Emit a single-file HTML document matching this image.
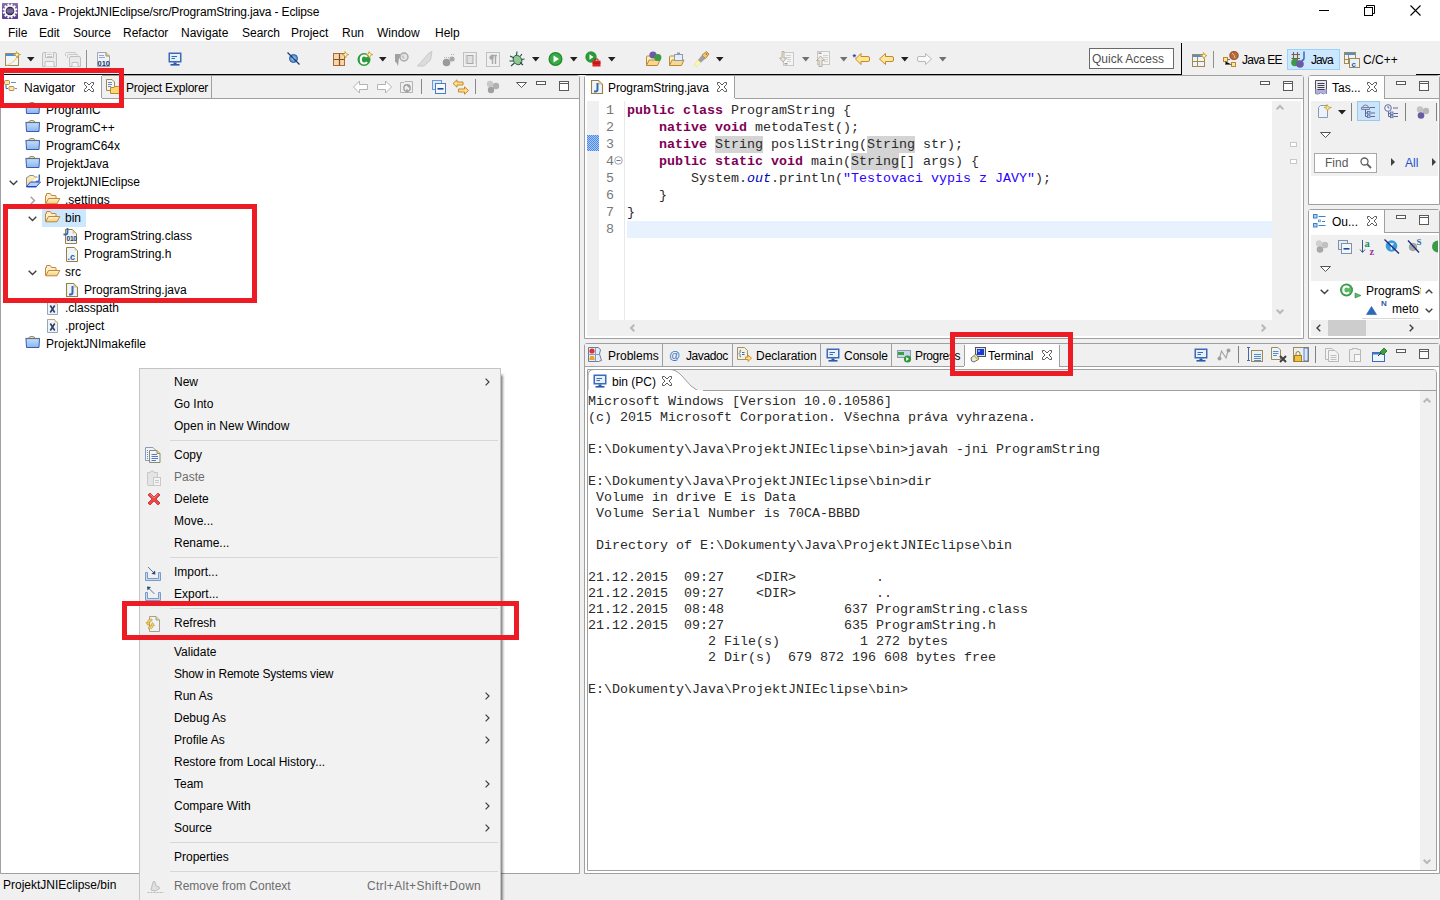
<!DOCTYPE html>
<html><head><meta charset="utf-8">
<style>
*{box-sizing:border-box;margin:0;padding:0}
html,body{width:1440px;height:900px;overflow:hidden;background:#f0f0f0;font-family:"Liberation Sans",sans-serif;font-size:12px;color:#000}
.a{position:absolute}
.t{position:absolute;white-space:nowrap;line-height:14px}
.m{position:absolute;font-family:"Liberation Mono",monospace;font-size:13.33px;white-space:pre;line-height:16px}
svg{position:absolute;overflow:visible}
</style></head><body>
<div class="a" style="left:0px;top:0px;width:1440px;height:41px;background:#fff"></div><svg style="left:2px;top:3px;" width="16" height="16" viewBox="0 0 16 16"><defs><linearGradient id="eg" x1="0" y1="0" x2="0" y2="1"><stop offset="0" stop-color="#8a70a8"/><stop offset="1" stop-color="#5a3898"/></linearGradient></defs>
<rect x="0" y="0" width="16" height="16" rx="0.8" fill="url(#eg)"/>
<g transform="translate(8,8)" fill="#fff"><circle r="5.7"/><rect x="-0.95" y="-7.4" width="1.9" height="2.4" transform="rotate(15)"/><rect x="-0.95" y="-7.4" width="1.9" height="2.4" transform="rotate(45)"/><rect x="-0.95" y="-7.4" width="1.9" height="2.4" transform="rotate(75)"/><rect x="-0.95" y="-7.4" width="1.9" height="2.4" transform="rotate(105)"/><rect x="-0.95" y="-7.4" width="1.9" height="2.4" transform="rotate(135)"/><rect x="-0.95" y="-7.4" width="1.9" height="2.4" transform="rotate(165)"/><rect x="-0.95" y="-7.4" width="1.9" height="2.4" transform="rotate(195)"/><rect x="-0.95" y="-7.4" width="1.9" height="2.4" transform="rotate(225)"/><rect x="-0.95" y="-7.4" width="1.9" height="2.4" transform="rotate(255)"/><rect x="-0.95" y="-7.4" width="1.9" height="2.4" transform="rotate(285)"/><rect x="-0.95" y="-7.4" width="1.9" height="2.4" transform="rotate(315)"/><rect x="-0.95" y="-7.4" width="1.9" height="2.4" transform="rotate(345)"/></g>
<circle cx="8" cy="8" r="4.3" fill="#1e1a2a"/>
<circle cx="8" cy="8" r="3.4" fill="#5a4a80"/>
<rect x="4.4" y="6.6" width="7.2" height="0.9" fill="#9a8ab8"/><rect x="4.4" y="8.4" width="7.2" height="0.9" fill="#9a8ab8"/></svg><div class="t" style="left:23px;top:5px;letter-spacing:-0.15px">Java - ProjektJNIEclipse/src/ProgramString.java - Eclipse</div><div class="a" style="left:1319px;top:10px;width:10px;height:1px;background:#000"></div><svg style="left:1364px;top:5px;" width="11" height="11" viewBox="0 0 11 11"><rect x="0.5" y="2.5" width="8" height="8" fill="none" stroke="#000"/><path d="M2.5 2.5V0.5H10.5V8.5H8.5" fill="none" stroke="#000"/></svg><svg style="left:1410px;top:5px;" width="11" height="11" viewBox="0 0 11 11"><path d="M0.5 0.5L10.5 10.5M10.5 0.5L0.5 10.5" stroke="#000" stroke-width="1.1"/></svg><div class="t" style="left:8px;top:26px">File</div><div class="t" style="left:39px;top:26px">Edit</div><div class="t" style="left:73px;top:26px">Source</div><div class="t" style="left:123px;top:26px">Refactor</div><div class="t" style="left:181px;top:26px">Navigate</div><div class="t" style="left:242px;top:26px">Search</div><div class="t" style="left:291px;top:26px">Project</div><div class="t" style="left:342px;top:26px">Run</div><div class="t" style="left:377px;top:26px">Window</div><div class="t" style="left:435px;top:26px">Help</div><div class="a" style="left:0px;top:74px;width:1182px;height:1px;background:#000"></div><div class="a" style="left:1181px;top:43px;width:1px;height:32px;background:#000"></div><div class="a" style="left:1416px;top:74px;width:24px;height:1px;background:#000"></div><div class="a" style="left:0px;top:75px;width:580px;height:799px;background:#fff;border:1px solid #a0a0a0;border-radius:0 3px 0 0"></div><div class="a" style="left:584px;top:75px;width:720px;height:264px;background:#fff;border:1px solid #a0a0a0;border-radius:3px 3px 0 0"></div><div class="a" style="left:1308px;top:75px;width:132px;height:130px;background:#fff;border:1px solid #a0a0a0;border-radius:3px 3px 0 0"></div><div class="a" style="left:1308px;top:209px;width:132px;height:130px;background:#fff;border:1px solid #a0a0a0;border-radius:3px 3px 0 0"></div><div class="a" style="left:584px;top:343px;width:856px;height:531px;background:#fff;border:1px solid #a0a0a0;border-radius:3px 3px 0 0"></div><div class="t" style="left:3px;top:878px">ProjektJNIEclipse/bin</div><div class="a" style="left:1px;top:76px;width:578px;height:22px;background:#f0f0f0"></div><div class="a" style="left:1px;top:98px;width:578px;height:1px;background:#a0a0a0"></div><div class="a" style="left:1px;top:75px;width:101px;height:24px;background:#fff"></div><div class="a" style="left:101px;top:76px;width:1px;height:22px;background:#a0a0a0"></div><div class="a" style="left:211px;top:76px;width:1px;height:22px;background:#a0a0a0"></div><svg style="left:4px;top:80px;" width="16" height="13" viewBox="0 0 16 13"><rect x="0.5" y="0.5" width="5" height="4" rx="1" fill="#fbeaa6" stroke="#b8894a"/>
<rect x="7" y="2" width="5" height="1" fill="#5a9ad8"/>
<path d="M2 5V8.5H4" fill="none" stroke="#3a6ab8"/>
<rect x="5" y="6.5" width="5" height="4" rx="1" fill="#fbeaa6" stroke="#b8894a"/>
<rect x="11" y="8" width="2" height="1" fill="#5a9ad8"/></svg><div class="t" style="left:24px;top:81px">Navigator</div><svg style="left:84px;top:82px;" width="10" height="10" viewBox="0 0 10 10"><path d="M0.5 0.5H2.5L5 3L7.5 0.5H9.5V2.5L7 5L9.5 7.5V9.5H7.5L5 7L2.5 9.5H0.5V7.5L3 5L0.5 2.5Z" fill="#fff" stroke="#5a5a5a" stroke-linejoin="round"/></svg><svg style="left:106px;top:79px;" width="16" height="16" viewBox="0 0 16 16"><path d="M0.5 0.5H6L8.5 3V11.5H0.5Z" fill="#f4f4f0" stroke="#9a8a5a"/>
<path d="M2 3.5H6M2 5.5H6M2 7.5H5" stroke="#6a8ac8"/>
<path d="M4.5 8.5H8L9 7.5H12.5L13.5 8.5V14.5H4.5Z" fill="#fcd66a" stroke="#b8893a"/></svg><div class="t" style="left:126px;top:81px;letter-spacing:-0.2px">Project Explorer</div><svg style="left:353px;top:80px;" width="16" height="14" viewBox="0 0 16 14"><path d="M0.5 7L6.5 1V4.5H14.5V9.5H6.5V13Z" fill="#fff" stroke="#b4b4b4" stroke-linejoin="round"/></svg><svg style="left:376px;top:80px;" width="16" height="14" viewBox="0 0 16 14"><path d="M15.5 7L9.5 1V4.5H1.5V9.5H9.5V13Z" fill="#fff" stroke="#b4b4b4" stroke-linejoin="round"/></svg><svg style="left:400px;top:80px;" width="13" height="14" viewBox="0 0 13 14"><path d="M0.5 2.5H4L5 1.5H12.5V12.5H0.5Z" fill="#f0f0f0" stroke="#b4b4b4"/><circle cx="7" cy="8" r="3.2" fill="none" stroke="#a0a0a0" stroke-width="1.4"/><path d="M7 5L9.5 7.5M7 13V9" stroke="#a0a0a0" stroke-width="1.2"/></svg><div class="a" style="left:421px;top:79px;width:1px;height:15px;background:#888"></div><svg style="left:432px;top:80px;" width="14" height="14" viewBox="0 0 14 14"><rect x="0.5" y="0.5" width="9" height="9" fill="#dceaf8" stroke="#6a9ad8"/><rect x="3.5" y="3.5" width="10" height="10" fill="#f4f8fc" stroke="#4a7ac8"/><rect x="5.5" y="8" width="6" height="1.6" fill="#1a4a9a"/></svg><svg style="left:452px;top:79px;" width="18" height="16" viewBox="0 0 18 16"><path d="M1 4.5L5 0.8V3H11V6H5V8.2Z" fill="#fde08a" stroke="#c8872a" stroke-linejoin="round"/>
<path d="M16.5 11.5L12.5 7.8V10H6.5V13H12.5V15.2Z" fill="#fde08a" stroke="#c8872a" stroke-linejoin="round"/></svg><div class="a" style="left:475px;top:79px;width:1px;height:15px;background:#888"></div><svg style="left:486px;top:80px;" width="14" height="14" viewBox="0 0 14 14"><circle cx="4" cy="4" r="3.2" fill="#c8c8c8"/><circle cx="10" cy="6" r="3.2" fill="#b0b0b0"/><circle cx="5" cy="10" r="3.2" fill="#a0a0a0"/></svg><svg style="left:516px;top:82px;" width="11" height="6" viewBox="0 0 11 6"><path d="M0.5 0.5H10.5L5.5 5.5Z" fill="#fff" stroke="#5a5a5a"/></svg><svg style="left:536px;top:81px;" width="10" height="4" viewBox="0 0 10 4"><rect x="0.5" y="0.5" width="9" height="3" fill="#fff" stroke="#5a5a5a"/></svg><svg style="left:559px;top:81px;" width="10" height="10" viewBox="0 0 10 10"><rect x="0.5" y="0.5" width="9" height="9" fill="#fff" stroke="#5a5a5a"/><path d="M0.5 2.5H9.5" stroke="#5a5a5a"/></svg><div class="a" style="left:42px;top:209px;width:44px;height:18px;background:#cce8ff"></div><svg style="left:25px;top:102px;" width="16" height="13" viewBox="0 0 16 13"><defs><linearGradient id="pg" x1="0" y1="0" x2="0" y2="1"><stop offset="0" stop-color="#bfe0fb"/><stop offset="1" stop-color="#8eb6ec"/></linearGradient></defs>
<path d="M3.5 2.5Q4 0.5 6 0.5H8Q9.5 0.5 10 2.5" fill="#fce6a0" stroke="#8a8e96"/>
<path d="M1 2.5H14.5L14 11.5H1.5Z" fill="url(#pg)" stroke="#3a5ab8"/>
<path d="M0.5 2.5H14.5" stroke="#6a7080" stroke-width="1.2"/></svg><div class="t" style="left:46px;top:103px">ProgramC</div><svg style="left:25px;top:120px;" width="16" height="13" viewBox="0 0 16 13"><defs><linearGradient id="pg" x1="0" y1="0" x2="0" y2="1"><stop offset="0" stop-color="#bfe0fb"/><stop offset="1" stop-color="#8eb6ec"/></linearGradient></defs>
<path d="M3.5 2.5Q4 0.5 6 0.5H8Q9.5 0.5 10 2.5" fill="#fce6a0" stroke="#8a8e96"/>
<path d="M1 2.5H14.5L14 11.5H1.5Z" fill="url(#pg)" stroke="#3a5ab8"/>
<path d="M0.5 2.5H14.5" stroke="#6a7080" stroke-width="1.2"/></svg><div class="t" style="left:46px;top:121px">ProgramC++</div><svg style="left:25px;top:138px;" width="16" height="13" viewBox="0 0 16 13"><defs><linearGradient id="pg" x1="0" y1="0" x2="0" y2="1"><stop offset="0" stop-color="#bfe0fb"/><stop offset="1" stop-color="#8eb6ec"/></linearGradient></defs>
<path d="M3.5 2.5Q4 0.5 6 0.5H8Q9.5 0.5 10 2.5" fill="#fce6a0" stroke="#8a8e96"/>
<path d="M1 2.5H14.5L14 11.5H1.5Z" fill="url(#pg)" stroke="#3a5ab8"/>
<path d="M0.5 2.5H14.5" stroke="#6a7080" stroke-width="1.2"/></svg><div class="t" style="left:46px;top:139px">ProgramC64x</div><svg style="left:25px;top:156px;" width="16" height="13" viewBox="0 0 16 13"><defs><linearGradient id="pg" x1="0" y1="0" x2="0" y2="1"><stop offset="0" stop-color="#bfe0fb"/><stop offset="1" stop-color="#8eb6ec"/></linearGradient></defs>
<path d="M3.5 2.5Q4 0.5 6 0.5H8Q9.5 0.5 10 2.5" fill="#fce6a0" stroke="#8a8e96"/>
<path d="M1 2.5H14.5L14 11.5H1.5Z" fill="url(#pg)" stroke="#3a5ab8"/>
<path d="M0.5 2.5H14.5" stroke="#6a7080" stroke-width="1.2"/></svg><div class="t" style="left:46px;top:157px">ProjektJava</div><svg style="left:25px;top:174px;" width="17" height="14" viewBox="0 0 17 14"><defs><linearGradient id="pj" x1="0" y1="0" x2="0" y2="1"><stop offset="0" stop-color="#fff2c8"/><stop offset="1" stop-color="#f8d488"/></linearGradient></defs>
<path d="M1.5 12.5V4Q1.5 3 2.5 3H3.5L4.5 1.5H8.5L9.5 3H12.5" fill="url(#pj)" stroke="#8a8e98"/>
<path d="M1.5 12.5L5.5 8H15.5L11.5 12.5Z" fill="#aad2fa" stroke="#3048c0" stroke-linejoin="round"/>
<path d="M1.5 12.8H11.5" stroke="#2840c0" stroke-width="1.3"/>
<path d="M14.3 0.5V5.5Q14.3 7.5 12.3 7.5Q11.5 7.5 11 7" fill="none" stroke="#3a6aa8" stroke-width="1.5"/></svg><svg style="left:9px;top:180px;" width="9" height="6" viewBox="0 0 9 6"><path d="M0.7 0.7L4.5 4.5L8.3 0.7" fill="none" stroke="#404040" stroke-width="1.4"/></svg><div class="t" style="left:46px;top:175px">ProjektJNIEclipse</div><svg style="left:45px;top:193px;" width="16" height="12" viewBox="0 0 16 12"><defs><linearGradient id="fg" x1="0" y1="0" x2="0" y2="1"><stop offset="0" stop-color="#fff4cc"/><stop offset="1" stop-color="#f4cf78"/></linearGradient></defs>
<path d="M0.5 10.5V3Q0.5 2.5 1 2.5H1.5V1Q1.5 0.5 2 0.5H5Q5.5 0.5 6 1.5L6.5 2.5H10.5Q11 2.5 11 3V5" fill="#fcefc8" stroke="#c4843a"/>
<path d="M0.8 10.8L3.5 5.5H14.8L12 10.8Z" fill="url(#fg)" stroke="#c4843a" stroke-linejoin="round"/></svg><svg style="left:30px;top:196px;" width="6" height="9" viewBox="0 0 6 9"><path d="M0.7 0.7L4.5 4.5L0.7 8.3" fill="none" stroke="#a0a0a0" stroke-width="1.4"/></svg><div class="t" style="left:65px;top:193px">.settings</div><svg style="left:45px;top:211px;" width="16" height="12" viewBox="0 0 16 12"><defs><linearGradient id="fg" x1="0" y1="0" x2="0" y2="1"><stop offset="0" stop-color="#fff4cc"/><stop offset="1" stop-color="#f4cf78"/></linearGradient></defs>
<path d="M0.5 10.5V3Q0.5 2.5 1 2.5H1.5V1Q1.5 0.5 2 0.5H5Q5.5 0.5 6 1.5L6.5 2.5H10.5Q11 2.5 11 3V5" fill="#fcefc8" stroke="#c4843a"/>
<path d="M0.8 10.8L3.5 5.5H14.8L12 10.8Z" fill="url(#fg)" stroke="#c4843a" stroke-linejoin="round"/></svg><svg style="left:28px;top:216px;" width="9" height="6" viewBox="0 0 9 6"><path d="M0.7 0.7L4.5 4.5L8.3 0.7" fill="none" stroke="#404040" stroke-width="1.4"/></svg><div class="t" style="left:65px;top:211px">bin</div><svg style="left:63px;top:228px;" width="16" height="16" viewBox="0 0 16 16"><path d="M2.5 1.5H9.5L13.5 5.5V15.5H2.5Z" fill="#eef4fb" stroke="#9a8040"/>
<path d="M9.5 1.5V5.5H13.5Z" fill="#dcc890"/>
<path d="M4.5 0V4.5Q4.5 6.5 2.5 6.5H0.5" fill="none" stroke="#3a6aa8" stroke-width="1.8"/>
<text x="3.6" y="13.3" font-family="Liberation Sans" font-size="6.6" font-weight="bold" fill="#1a3a6a" letter-spacing="-0.3">010</text></svg><div class="t" style="left:84px;top:229px">ProgramString.class</div><svg style="left:66px;top:247px;" width="13" height="15" viewBox="0 0 13 15"><path d="M0.5 0.5H8.5L11.5 3.5V14.5H0.5Z" fill="#eef4fb" stroke="#9a8040"/>
<path d="M8.5 0.5V3.5H11.5Z" fill="#dcc890"/>
<text x="1.5" y="12.5" font-family="Liberation Sans" font-size="9" font-weight="bold" fill="#2a5aa8">.c</text></svg><div class="t" style="left:84px;top:247px">ProgramString.h</div><svg style="left:45px;top:265px;" width="16" height="12" viewBox="0 0 16 12"><defs><linearGradient id="fg" x1="0" y1="0" x2="0" y2="1"><stop offset="0" stop-color="#fff4cc"/><stop offset="1" stop-color="#f4cf78"/></linearGradient></defs>
<path d="M0.5 10.5V3Q0.5 2.5 1 2.5H1.5V1Q1.5 0.5 2 0.5H5Q5.5 0.5 6 1.5L6.5 2.5H10.5Q11 2.5 11 3V5" fill="#fcefc8" stroke="#c4843a"/>
<path d="M0.8 10.8L3.5 5.5H14.8L12 10.8Z" fill="url(#fg)" stroke="#c4843a" stroke-linejoin="round"/></svg><svg style="left:28px;top:270px;" width="9" height="6" viewBox="0 0 9 6"><path d="M0.7 0.7L4.5 4.5L8.3 0.7" fill="none" stroke="#404040" stroke-width="1.4"/></svg><div class="t" style="left:65px;top:265px">src</div><svg style="left:66px;top:283px;" width="12" height="14" viewBox="0 0 12 14"><path d="M0.5 0.5H7.5L11.5 4.5V13.5H0.5Z" fill="#eef4fb" stroke="#9a8040" stroke-width="1.1"/>
<path d="M7.5 0.5V4.5H11.5Z" fill="#dcc890"/>
<path d="M6.5 3V9.5Q6.5 11.5 4.5 11.5H3" fill="none" stroke="#3a6aa8" stroke-width="2"/></svg><div class="t" style="left:84px;top:283px">ProgramString.java</div><svg style="left:47px;top:301px;" width="12" height="15" viewBox="0 0 12 15"><path d="M0.5 0.5H7.5L10.5 3.5V13.5H0.5Z" fill="#f0f4fa" stroke="#98a4b8"/>
<path d="M0.5 0.5H7.5L10.5 3.5V6" fill="none" stroke="#b8a880"/>
<path d="M7.5 0.5V3.5H10.5Z" fill="#e0cc90"/>
<path d="M3.3 4.5L7.7 11.5M7.7 4.5L3.3 11.5" stroke="#2a4068" stroke-width="1.6"/></svg><div class="t" style="left:65px;top:301px">.classpath</div><svg style="left:47px;top:319px;" width="12" height="15" viewBox="0 0 12 15"><path d="M0.5 0.5H7.5L10.5 3.5V13.5H0.5Z" fill="#f0f4fa" stroke="#98a4b8"/>
<path d="M0.5 0.5H7.5L10.5 3.5V6" fill="none" stroke="#b8a880"/>
<path d="M7.5 0.5V3.5H10.5Z" fill="#e0cc90"/>
<path d="M3.3 4.5L7.7 11.5M7.7 4.5L3.3 11.5" stroke="#2a4068" stroke-width="1.6"/></svg><div class="t" style="left:65px;top:319px">.project</div><svg style="left:25px;top:336px;" width="16" height="13" viewBox="0 0 16 13"><defs><linearGradient id="pg" x1="0" y1="0" x2="0" y2="1"><stop offset="0" stop-color="#bfe0fb"/><stop offset="1" stop-color="#8eb6ec"/></linearGradient></defs>
<path d="M3.5 2.5Q4 0.5 6 0.5H8Q9.5 0.5 10 2.5" fill="#fce6a0" stroke="#8a8e96"/>
<path d="M1 2.5H14.5L14 11.5H1.5Z" fill="url(#pg)" stroke="#3a5ab8"/>
<path d="M0.5 2.5H14.5" stroke="#6a7080" stroke-width="1.2"/></svg><div class="t" style="left:46px;top:337px">ProjektJNImakefile</div><div class="a" style="left:585px;top:76px;width:718px;height:22px;background:#f0f0f0"></div><div class="a" style="left:585px;top:98px;width:718px;height:1px;background:#a0a0a0"></div><div class="a" style="left:585px;top:76px;width:150px;height:23px;background:#fff;border-top-right-radius:3px"></div><div class="a" style="left:734px;top:76px;width:1px;height:22px;background:#a0a0a0"></div><svg style="left:591px;top:80px;" width="12" height="14" viewBox="0 0 12 14"><path d="M0.5 0.5H7.5L11.5 4.5V13.5H0.5Z" fill="#eef4fb" stroke="#9a8040" stroke-width="1.1"/>
<path d="M7.5 0.5V4.5H11.5Z" fill="#dcc890"/>
<path d="M6.5 3V9.5Q6.5 11.5 4.5 11.5H3" fill="none" stroke="#3a6aa8" stroke-width="2"/></svg><div class="t" style="left:608px;top:81px;letter-spacing:-0.1px">ProgramString.java</div><svg style="left:717px;top:82px;" width="10" height="10" viewBox="0 0 10 10"><path d="M0.5 0.5H2.5L5 3L7.5 0.5H9.5V2.5L7 5L9.5 7.5V9.5H7.5L5 7L2.5 9.5H0.5V7.5L3 5L0.5 2.5Z" fill="#fff" stroke="#5a5a5a" stroke-linejoin="round"/></svg><svg style="left:1260px;top:81px;" width="10" height="4" viewBox="0 0 10 4"><rect x="0.5" y="0.5" width="9" height="3" fill="#fff" stroke="#5a5a5a"/></svg><svg style="left:1283px;top:81px;" width="10" height="10" viewBox="0 0 10 10"><rect x="0.5" y="0.5" width="9" height="9" fill="#fff" stroke="#5a5a5a"/><path d="M0.5 2.5H9.5" stroke="#5a5a5a"/></svg><div class="a" style="left:587px;top:101px;width:12px;height:219px;background:#f0f0f0"></div><svg style="left:587px;top:135px;" width="12" height="16" viewBox="0 0 12 16"><defs><pattern id="chk" width="2" height="2" patternUnits="userSpaceOnUse"><rect width="2" height="2" fill="#a8c8f0"/><rect width="1" height="1" fill="#4a8ae8"/><rect x="1" y="1" width="1" height="1" fill="#4a8ae8"/></pattern></defs><rect width="12" height="16" fill="url(#chk)"/></svg><div class="a" style="left:624px;top:101px;width:1px;height:219px;background:#e8e8e8"></div><div class="a" style="left:627px;top:221px;width:645px;height:17px;background:#e8f2fe"></div><div class="a" style="left:715px;top:136px;width:48px;height:17px;background:#d4d4d4"></div><div class="a" style="left:867px;top:136px;width:48px;height:17px;background:#d4d4d4"></div><div class="a" style="left:851px;top:153px;width:48px;height:17px;background:#d4d4d4"></div><div class="m" style="left:606px;top:102px;line-height:17px;color:#787878">1</div><div class="m" style="left:606px;top:119px;line-height:17px;color:#787878">2</div><div class="m" style="left:606px;top:136px;line-height:17px;color:#787878">3</div><div class="m" style="left:606px;top:153px;line-height:17px;color:#787878">4</div><div class="m" style="left:606px;top:170px;line-height:17px;color:#787878">5</div><div class="m" style="left:606px;top:187px;line-height:17px;color:#787878">6</div><div class="m" style="left:606px;top:204px;line-height:17px;color:#787878">7</div><div class="m" style="left:606px;top:221px;line-height:17px;color:#787878">8</div><svg style="left:614px;top:156px;" width="9" height="9" viewBox="0 0 9 9"><circle cx="4.5" cy="4.5" r="3.8" fill="#fff" stroke="#a0a0b0"/><path d="M2.5 4.5H6.5" stroke="#707080"/></svg><div class="m" style="left:627px;top:102px;line-height:17px;color:#2a2a2a"><span style="color:#7f0055;font-weight:bold">public</span> <span style="color:#7f0055;font-weight:bold">class</span> ProgramString {</div><div class="m" style="left:627px;top:119px;line-height:17px;color:#2a2a2a">    <span style="color:#7f0055;font-weight:bold">native</span> <span style="color:#7f0055;font-weight:bold">void</span> metodaTest();</div><div class="m" style="left:627px;top:136px;line-height:17px;color:#2a2a2a">    <span style="color:#7f0055;font-weight:bold">native</span> String posliString(String str);</div><div class="m" style="left:627px;top:153px;line-height:17px;color:#2a2a2a">    <span style="color:#7f0055;font-weight:bold">public</span> <span style="color:#7f0055;font-weight:bold">static</span> <span style="color:#7f0055;font-weight:bold">void</span> main(String[] args) {</div><div class="m" style="left:627px;top:170px;line-height:17px;color:#2a2a2a">        System.<span style="color:#0000c0;font-style:italic">out</span>.println(<span style="color:#2a00ff">"Testovaci vypis z JAVY"</span>);</div><div class="m" style="left:627px;top:187px;line-height:17px;color:#2a2a2a">    }</div><div class="m" style="left:627px;top:204px;line-height:17px;color:#2a2a2a">}</div><div class="a" style="left:1272px;top:101px;width:29px;height:219px;background:#f0f0f0"></div><svg style="left:1276px;top:105px;" width="8" height="5" viewBox="0 0 8 5"><path d="M0.7 4.3L4 1L7.3 4.3" fill="none" stroke="#b8b8b8" stroke-width="2"/></svg><svg style="left:1276px;top:309px;" width="8" height="5" viewBox="0 0 8 5"><path d="M0.7 0.7L4 4L7.3 0.7" fill="none" stroke="#b8b8b8" stroke-width="2"/></svg><div class="a" style="left:1290px;top:142px;width:7px;height:5px;background:#fff;border:1px solid #c8c8c8"></div><div class="a" style="left:1290px;top:159px;width:7px;height:5px;background:#fff;border:1px solid #c8c8c8"></div><div class="a" style="left:587px;top:320px;width:685px;height:16px;background:#f0f0f0"></div><div class="a" style="left:1272px;top:320px;width:29px;height:16px;background:#f0f0f0"></div><svg style="left:630px;top:324px;" width="5" height="8" viewBox="0 0 5 8"><path d="M4.3 0.7L1 4L4.3 7.3" fill="none" stroke="#b8b8b8" stroke-width="2"/></svg><svg style="left:1261px;top:324px;" width="5" height="8" viewBox="0 0 5 8"><path d="M0.7 0.7L4 4L0.7 7.3" fill="none" stroke="#b8b8b8" stroke-width="2"/></svg><div class="a" style="left:1309px;top:76px;width:130px;height:22px;background:#f0f0f0"></div><div class="a" style="left:1309px;top:98px;width:130px;height:1px;background:#a0a0a0"></div><div class="a" style="left:1309px;top:76px;width:75px;height:23px;background:#fff;border-top-left-radius:3px"></div><div class="a" style="left:1384px;top:76px;width:1px;height:22px;background:#a0a0a0"></div><svg style="left:1315px;top:80px;" width="12" height="15" viewBox="0 0 12 15"><path d="M0.5 0.5H11.5V13.5L10 12.5L8.5 14L6 12.5L3 14L0.5 13.5Z" fill="#e8e8f4" stroke="#505060"/><path d="M0.5 9H11.5V13.5L8.5 14L6 12.5L3 14L0.5 13.5Z" fill="#b0b0e0"/><path d="M2.5 3.5H9.5M2.5 5.5H9.5M2.5 7.5H9.5M2.5 9.5H9.5" stroke="#404040"/></svg><div class="t" style="left:1332px;top:81px">Tas...</div><svg style="left:1367px;top:82px;" width="10" height="10" viewBox="0 0 10 10"><path d="M0.5 0.5H2.5L5 3L7.5 0.5H9.5V2.5L7 5L9.5 7.5V9.5H7.5L5 7L2.5 9.5H0.5V7.5L3 5L0.5 2.5Z" fill="#fff" stroke="#5a5a5a" stroke-linejoin="round"/></svg><svg style="left:1396px;top:81px;" width="10" height="4" viewBox="0 0 10 4"><rect x="0.5" y="0.5" width="9" height="3" fill="#fff" stroke="#5a5a5a"/></svg><svg style="left:1419px;top:81px;" width="10" height="10" viewBox="0 0 10 10"><rect x="0.5" y="0.5" width="9" height="9" fill="#fff" stroke="#5a5a5a"/><path d="M0.5 2.5H9.5" stroke="#5a5a5a"/></svg><div class="a" style="left:1311px;top:101px;width:127px;height:75px;background:#f0f0f0"></div><svg style="left:1318px;top:104px;" width="14" height="15" viewBox="0 0 14 15"><path d="M0.5 3.5L2.5 1.5H9.5V13.5H0.5Z" fill="#eef2fa" stroke="#8a9ab8"/><path d="M9 0.5L10.5 3L13.5 3.5L10.5 4.5L9.5 7L8.5 4.5L6 3.5L8.5 3Z" fill="#fde88a" stroke="#c8a030" stroke-width="0.8"/></svg><svg style="left:1338px;top:110px;" width="8" height="5" viewBox="0 0 8 5"><path d="M0 0H8L4 4.5Z" fill="#202020"/></svg><div class="a" style="left:1351px;top:103px;width:1px;height:18px;background:#808080"></div><div class="a" style="left:1357px;top:101px;width:23px;height:20px;background:#cce4f7;border:1px solid #99c9ef"></div><svg style="left:1361px;top:104px;" width="15" height="14" viewBox="0 0 15 14"><path d="M1.5 3.5Q2 1 4.5 1Q7 1 7.5 3.5Z" fill="#f4d8c8" stroke="#7080b0"/><path d="M0.5 3.5H8.5V5.5H0.5Z" fill="#c8d0e8" stroke="#7080b0"/><path d="M4.5 5.5V12.5H7M4.5 9H7M9 3.5H14M9.5 9H14M9.5 12.5H14" fill="none" stroke="#5a6aa0"/><rect x="6.5" y="7.5" width="2.5" height="2.5" fill="#c8d0e8" stroke="#5a6aa0" stroke-width="0.8"/><rect x="6.5" y="11" width="2.5" height="2.5" fill="#c8d0e8" stroke="#5a6aa0" stroke-width="0.8"/></svg><svg style="left:1384px;top:104px;" width="15" height="14" viewBox="0 0 15 14"><circle cx="4" cy="4" r="3.3" fill="#f4f8fc" stroke="#5a6aa0"/><path d="M4 2V4H5.5" stroke="#5a6aa0" fill="none"/><path d="M4.5 7.5V12.5H7M4.5 9.5H7M9 4H14M9.5 9.5H14M9.5 12.5H14" fill="none" stroke="#5a6aa0"/><rect x="6.5" y="8" width="2.5" height="2.5" fill="#c8d0e8" stroke="#5a6aa0" stroke-width="0.8"/><rect x="6.5" y="11.2" width="2.5" height="2.5" fill="#c8d0e8" stroke="#5a6aa0" stroke-width="0.8"/></svg><div class="a" style="left:1405px;top:103px;width:1px;height:18px;background:#808080"></div><svg style="left:1416px;top:106px;" width="14" height="13" viewBox="0 0 14 13"><circle cx="4" cy="3.5" r="3.2" fill="#c4c4c4"/><circle cx="10" cy="5" r="3.2" fill="#b8b8b8"/><circle cx="5" cy="9.5" r="3.3" fill="#6a5aa0"/></svg><div class="a" style="left:1436px;top:103px;width:1px;height:18px;background:#808080"></div><svg style="left:1320px;top:132px;" width="11" height="6" viewBox="0 0 11 6"><path d="M0.5 0.5H10.5L5.5 5.5Z" fill="#fff" stroke="#555"/></svg><div class="a" style="left:1314px;top:153px;width:63px;height:20px;background:#fff;border:1px solid #a8a8a8"></div><div class="t" style="left:1325px;top:156px;color:#5a5a5a">Find</div><svg style="left:1360px;top:157px;" width="12" height="12" viewBox="0 0 12 12"><circle cx="4.5" cy="4.5" r="3.5" fill="#fff" stroke="#606060" stroke-width="1.3"/><path d="M7 7L11 11" stroke="#606060" stroke-width="1.8"/></svg><svg style="left:1391px;top:158px;" width="4" height="8" viewBox="0 0 4 8"><path d="M0 0L4 4L0 8Z" fill="#404040"/></svg><div class="t" style="left:1405px;top:156px;color:#2050d0">All</div><svg style="left:1432px;top:158px;" width="4" height="8" viewBox="0 0 4 8"><path d="M0 0L4 4L0 8Z" fill="#404040"/></svg><div class="a" style="left:1309px;top:210px;width:130px;height:22px;background:#f0f0f0"></div><div class="a" style="left:1309px;top:232px;width:130px;height:1px;background:#a0a0a0"></div><div class="a" style="left:1309px;top:210px;width:75px;height:23px;background:#fff;border-top-left-radius:3px"></div><div class="a" style="left:1384px;top:210px;width:1px;height:22px;background:#a0a0a0"></div><svg style="left:1313px;top:214px;" width="13" height="14" viewBox="0 0 13 14"><rect x="0.5" y="0.5" width="3.5" height="3.5" fill="#a8d0f8" stroke="#3a80c8"/><rect x="0.5" y="9.5" width="3.5" height="3.5" fill="#a8d0f8" stroke="#3a80c8"/><rect x="5.5" y="6" width="1.8" height="1.8" fill="#fff" stroke="#3a80c8" stroke-width="0.7"/><path d="M5.5 2.5H12.5M9 7.5H12M5.5 11.5H12.5" stroke="#3a80c8"/></svg><div class="t" style="left:1332px;top:215px">Ou...</div><svg style="left:1367px;top:216px;" width="10" height="10" viewBox="0 0 10 10"><path d="M0.5 0.5H2.5L5 3L7.5 0.5H9.5V2.5L7 5L9.5 7.5V9.5H7.5L5 7L2.5 9.5H0.5V7.5L3 5L0.5 2.5Z" fill="#fff" stroke="#5a5a5a" stroke-linejoin="round"/></svg><svg style="left:1396px;top:215px;" width="10" height="4" viewBox="0 0 10 4"><rect x="0.5" y="0.5" width="9" height="3" fill="#fff" stroke="#5a5a5a"/></svg><svg style="left:1419px;top:215px;" width="10" height="10" viewBox="0 0 10 10"><rect x="0.5" y="0.5" width="9" height="9" fill="#fff" stroke="#5a5a5a"/><path d="M0.5 2.5H9.5" stroke="#5a5a5a"/></svg><div class="a" style="left:1311px;top:235px;width:127px;height:46px;background:#f0f0f0"></div><svg style="left:1315px;top:240px;" width="14" height="13" viewBox="0 0 14 13"><circle cx="4" cy="3.5" r="3.2" fill="#d0d0d0"/><circle cx="10" cy="5" r="3.2" fill="#c0c0c0"/><circle cx="5" cy="9.5" r="3.3" fill="#a8a8a8"/></svg><svg style="left:1338px;top:240px;" width="14" height="14" viewBox="0 0 14 14"><rect x="0.5" y="0.5" width="9" height="9" fill="#e4ecf4" stroke="#8090a8"/><rect x="3.5" y="3.5" width="10" height="10" fill="#f0f6fa" stroke="#8090a8"/><rect x="5.5" y="8" width="6" height="1.6" fill="#1a4a9a"/></svg><svg style="left:1359px;top:238px;" width="19" height="17" viewBox="0 0 19 17"><path d="M3.5 2V14M1 11.5L3.5 14.5L6 11.5" fill="none" stroke="#3a5a8a" stroke-width="1"/><text x="5.5" y="8.5" font-family="Liberation Serif" font-size="10.5" font-weight="bold" fill="#1a8a6a">a</text><text x="10.5" y="16.5" font-family="Liberation Serif" font-size="10.5" font-weight="bold" fill="#9a3a9a">z</text></svg><svg style="left:1384px;top:239px;" width="16" height="16" viewBox="0 0 16 16"><circle cx="7.5" cy="7" r="5.8" fill="#3a9ae0"/><path d="M5.5 5H9.5M7.5 5V10.5" stroke="#fff" stroke-width="1.6"/><path d="M0.5 0.5L15 14.5" stroke="#1a2a7a" stroke-width="1.3"/></svg><svg style="left:1407px;top:237px;" width="15" height="17" viewBox="0 0 15 17"><circle cx="6" cy="10" r="3.8" fill="#a8a8a8" stroke="#909090" stroke-width="0.6"/><path d="M1 3.5L12 15.5" stroke="#1a2a7a" stroke-width="1.3"/><text x="9.5" y="8" font-family="Liberation Serif" font-size="9" font-weight="bold" fill="#2a6aa8">S</text></svg><svg style="left:1433px;top:240px;" width="5" height="13" viewBox="0 0 5 13"><path d="M5 0.5A6 6 0 0 0 5 12.5Z" fill="#3a9a4a"/></svg><svg style="left:1320px;top:266px;" width="11" height="6" viewBox="0 0 11 6"><path d="M0.5 0.5H10.5L5.5 5.5Z" fill="#fff" stroke="#555"/></svg><svg style="left:1320px;top:289px;" width="9" height="6" viewBox="0 0 9 6"><path d="M0.7 0.7L4.5 4.5L8.3 0.7" fill="none" stroke="#404040" stroke-width="1.4"/></svg><svg style="left:1339px;top:283px;" width="23" height="15" viewBox="0 0 23 15"><circle cx="7.5" cy="7" r="6.5" fill="#3a9a48"/><circle cx="7.5" cy="7" r="5" fill="#5ab868"/><path d="M10 4.8Q9 3.6 7.6 3.6Q4.3 3.6 4.3 7Q4.3 10.4 7.6 10.4Q9 10.4 10 9.2" fill="none" stroke="#fff" stroke-width="2"/><path d="M16 10L22 12.5L16 15Z" fill="#5aba68" stroke="#2a8a38" stroke-width="0.6"/></svg><div class="t" style="left:1366px;top:284px">ProgramSt</div><svg style="left:1366px;top:306px;" width="11" height="9" viewBox="0 0 11 9"><path d="M0.5 8.5L5.5 0.5L10.5 8.5Z" fill="#2a6ab8" stroke="#2a5aa8" stroke-width="0.6"/></svg><div class="t" style="left:1381px;top:299px;font-size:8px;line-height:9px;color:#2a5aa8;font-weight:bold">N</div><div class="t" style="left:1392px;top:302px">meto</div><div class="a" style="left:1421px;top:281px;width:17px;height:38px;background:#fff"></div><svg style="left:1425px;top:289px;" width="8" height="5" viewBox="0 0 8 5"><path d="M0.7 4.3L4 1L7.3 4.3" fill="none" stroke="#404040" stroke-width="1.4"/></svg><svg style="left:1425px;top:308px;" width="8" height="5" viewBox="0 0 8 5"><path d="M0.7 0.7L4 4L7.3 0.7" fill="none" stroke="#404040" stroke-width="1.4"/></svg><div class="a" style="left:1362px;top:318px;width:58px;height:1px;background:#d8d8d8"></div><div class="a" style="left:1311px;top:320px;width:127px;height:16px;background:#f0f0f0"></div><div class="a" style="left:1328px;top:320px;width:38px;height:16px;background:#cdcdcd"></div><svg style="left:1316px;top:324px;" width="5" height="8" viewBox="0 0 5 8"><path d="M4.3 0.7L1 4L4.3 7.3" fill="none" stroke="#404040" stroke-width="1.4"/></svg><svg style="left:1409px;top:324px;" width="5" height="8" viewBox="0 0 5 8"><path d="M0.7 0.7L4 4L0.7 7.3" fill="none" stroke="#404040" stroke-width="1.4"/></svg><div class="a" style="left:585px;top:344px;width:854px;height:22px;background:#f0f0f0"></div><div class="a" style="left:585px;top:366px;width:854px;height:1px;background:#a0a0a0"></div><div class="a" style="left:662px;top:344px;width:1px;height:22px;background:#a0a0a0"></div><div class="a" style="left:732px;top:344px;width:1px;height:22px;background:#a0a0a0"></div><div class="a" style="left:820px;top:344px;width:1px;height:22px;background:#a0a0a0"></div><div class="a" style="left:891px;top:344px;width:1px;height:22px;background:#a0a0a0"></div><div class="a" style="left:964px;top:344px;width:95px;height:23px;background:#fff;border-top-left-radius:3px;border-top-right-radius:3px"></div><div class="a" style="left:964px;top:345px;width:1px;height:21px;background:#a0a0a0"></div><div class="a" style="left:1059px;top:345px;width:1px;height:21px;background:#a0a0a0"></div><svg style="left:588px;top:347px;" width="15" height="15" viewBox="0 0 15 15"><path d="M0.5 0.5H10L12.5 2.5L11.5 7L13.5 13.5L10.5 14.5H0.5Z" fill="#e4eefa" stroke="#6a7a9a"/><path d="M0.5 7.5H11.5M7.5 0.5V14.5" stroke="#8a9aba"/><circle cx="4" cy="4" r="2.6" fill="#e03030"/><path d="M1.5 13V11Q1.5 8.8 4 8.8Q6.5 8.8 6.5 11V13Z" fill="#f8a020"/></svg><div class="t" style="left:608px;top:349px">Problems</div><svg style="left:669px;top:349px;" width="11" height="11" viewBox="0 0 11 11"><text x="0" y="9.5" font-family="Liberation Sans" font-size="11" font-style="italic" font-weight="bold" fill="#3a7ac8">@</text></svg><div class="t" style="left:686px;top:349px;letter-spacing:-0.4px">Javadoc</div><svg style="left:737px;top:347px;" width="15" height="15" viewBox="0 0 15 15"><path d="M0.5 0.5H7.5L10.5 3.5V12.5H0.5Z" fill="#f4f0e0" stroke="#a89060"/><path d="M4 3Q3 3 3 4.5V5.5L2 6.5L3 7.5V8.5Q3 10 4 10" fill="none" stroke="#3a6ab8"/><path d="M5 5.5H7.5M5 7.5H7.5" stroke="#3a6ab8"/><path d="M8.5 10H11V8L14.5 11.2L11 14.5V12.5H8.5Z" fill="#fde08a" stroke="#c8872a" stroke-width="0.9"/></svg><div class="t" style="left:756px;top:349px">Declaration</div><svg style="left:826px;top:348px;" width="14" height="14" viewBox="0 0 14 14"><rect x="0.5" y="0.5" width="13" height="10" fill="#3a6ab8"/><rect x="2" y="2" width="10" height="7" fill="#e8f0fa"/><path d="M3.5 4.5H9M3.5 6.5H7" stroke="#3a6ab8"/><rect x="5.5" y="10.5" width="3" height="1.5" fill="#2a5aa8"/><rect x="2.5" y="12" width="9" height="1.6" fill="#2a5aa8"/></svg><div class="t" style="left:844px;top:349px">Console</div><svg style="left:897px;top:349px;" width="15" height="14" viewBox="0 0 15 14"><rect x="0.5" y="1.5" width="13" height="7" fill="#c8d8ea" stroke="#8a9aaa"/><rect x="1" y="3" width="6" height="3" fill="#3aa040"/><circle cx="10.5" cy="10" r="3.6" fill="#2a9a3a"/><path d="M9.2 8L12 10L9.2 12Z" fill="#fff"/></svg><div class="t" style="left:915px;top:349px;letter-spacing:-0.35px">Progress</div><svg style="left:969px;top:347px;" width="17" height="17" viewBox="0 0 17 17"><rect x="6.5" y="0.5" width="10" height="9" fill="#e0e0e0" stroke="#505050"/><rect x="8" y="2" width="7" height="6" fill="#1a3ad8"/><rect x="9" y="3" width="2" height="2" fill="#80a0ff"/><path d="M2 11L7 7L10 12L5 15Q1.5 15 2 11Z" fill="#e8e8e8" stroke="#606060" stroke-width="0.9"/><path d="M5 8.5L9 13" stroke="#d0c020" stroke-width="1.3"/></svg><div class="t" style="left:988px;top:349px">Terminal</div><svg style="left:1042px;top:350px;" width="10" height="10" viewBox="0 0 10 10"><path d="M0.5 0.5H2.5L5 3L7.5 0.5H9.5V2.5L7 5L9.5 7.5V9.5H7.5L5 7L2.5 9.5H0.5V7.5L3 5L0.5 2.5Z" fill="#fff" stroke="#5a5a5a" stroke-linejoin="round"/></svg><svg style="left:1194px;top:348px;" width="14" height="14" viewBox="0 0 14 14"><rect x="0.5" y="0.5" width="13" height="10" fill="#3a6ab8"/><rect x="2" y="2" width="10" height="7" fill="#e8f0fa"/><path d="M3.5 4.5H9M3.5 6.5H7" stroke="#3a6ab8"/><rect x="5.5" y="10.5" width="3" height="1.5" fill="#2a5aa8"/><rect x="2.5" y="12" width="9" height="1.6" fill="#2a5aa8"/></svg><svg style="left:1217px;top:348px;" width="14" height="13" viewBox="0 0 14 13"><circle cx="2.5" cy="10.5" r="2" fill="#a0a0a0"/><circle cx="11.5" cy="2.5" r="2" fill="#a0a0a0"/><path d="M2.5 10L4.5 3L9 10L11 3" fill="none" stroke="#a0a0a0" stroke-width="1.1"/></svg><div class="a" style="left:1238px;top:346px;width:1px;height:17px;background:#808080"></div><svg style="left:1247px;top:347px;" width="16" height="15" viewBox="0 0 16 15"><path d="M1.5 0.5V13.5M0 0.5H3M0 13.5H3" stroke="#3a6ab8"/><rect x="4.5" y="3.5" width="11" height="11" fill="#e8f0fa" stroke="#a08a50"/><path d="M7 7.5H14M7 9.5H14M7 11.5H14M7 13.5H14" stroke="#5a8ac8"/></svg><svg style="left:1271px;top:347px;" width="16" height="15" viewBox="0 0 16 15"><path d="M0.5 0.5H7L9.5 3V12.5H0.5Z" fill="#eef2fa" stroke="#a08a50"/><path d="M2 4.5H7.5M2 6.5H7.5M2 8.5H6" stroke="#5a8ac8"/><path d="M9 9L15 15M15 9L9 15" stroke="#404040" stroke-width="2"/></svg><svg style="left:1293px;top:347px;" width="16" height="16" viewBox="0 0 16 16"><rect x="0.5" y="0.5" width="15" height="14" fill="#e8f0fa" stroke="#a08a50"/><rect x="11" y="1" width="4" height="13" fill="#dce8f8" stroke="#3a6ab8" stroke-width="0.8"/><rect x="1.5" y="8.5" width="7" height="6" fill="#f0c040" stroke="#a08020"/><path d="M3 8.5V6.5Q3 4.5 5 4.5Q7 4.5 7 6.5V8.5" fill="none" stroke="#a08020"/></svg><div class="a" style="left:1315px;top:346px;width:1px;height:17px;background:#808080"></div><svg style="left:1325px;top:348px;" width="14" height="14" viewBox="0 0 14 14"><path d="M0.5 0.5H7L9.5 3V11.5H0.5Z" fill="#f4f4f4" stroke="#b8b8b8"/><path d="M3.5 2.5H10L13.5 6V13.5H3.5Z" fill="#f4f4f4" stroke="#b8b8b8"/><path d="M5.5 7.5H11.5M5.5 9.5H11.5M5.5 11.5H11.5" stroke="#c0c0c0"/></svg><svg style="left:1349px;top:347px;" width="13" height="15" viewBox="0 0 13 15"><path d="M0.5 2.5H3.5V1.5H8.5V2.5H11.5V14.5H0.5Z" fill="#f0f0f0" stroke="#b8b8b8"/><rect x="5.5" y="7.5" width="6" height="7" fill="#f8f8f8" stroke="#b8b8b8"/></svg><svg style="left:1372px;top:347px;" width="16" height="15" viewBox="0 0 16 15"><rect x="0.5" y="5.5" width="12" height="9" fill="#f0f6fc" stroke="#3a6ab8"/><rect x="0.5" y="5.5" width="12" height="2" fill="#3a7ac8"/><path d="M6 9L9 6" stroke="#303030"/><path d="M8 5L12 1L15 4L11 8Z" fill="#3aa040" stroke="#1a7020" stroke-width="0.8"/></svg><svg style="left:1396px;top:349px;" width="10" height="4" viewBox="0 0 10 4"><rect x="0.5" y="0.5" width="9" height="3" fill="#fff" stroke="#5a5a5a"/></svg><svg style="left:1419px;top:349px;" width="10" height="10" viewBox="0 0 10 10"><rect x="0.5" y="0.5" width="9" height="9" fill="#fff" stroke="#5a5a5a"/><path d="M0.5 2.5H9.5" stroke="#5a5a5a"/></svg><div class="a" style="left:587px;top:369px;width:850px;height:502px;background:#fff;border:1px solid #a0a0a0;border-top-right-radius:4px"></div><div class="a" style="left:588px;top:370px;width:848px;height:21px;background:#f0f0f0;border-top-right-radius:3px"></div><div class="a" style="left:588px;top:390px;width:848px;height:1px;background:#a0a0a0"></div><svg style="left:588px;top:369px;" width="115" height="23" viewBox="0 0 115 23"><path d="M0 22V7Q0 0.5 6 0.5H82Q88 0.5 94 7L103 17Q109 22.5 115 22.5H0Z" fill="#fff" stroke="#a0a0a0"/><rect x="0" y="21" width="115" height="3" fill="#fff"/></svg><svg style="left:593px;top:374px;" width="14" height="14" viewBox="0 0 14 14"><rect x="0.5" y="0.5" width="13" height="10" fill="#3a6ab8"/><rect x="2" y="2" width="10" height="7" fill="#e8f0fa"/><path d="M3.5 4.5H9M3.5 6.5H7" stroke="#3a6ab8"/><rect x="5.5" y="10.5" width="3" height="1.5" fill="#2a5aa8"/><rect x="2.5" y="12" width="9" height="1.6" fill="#2a5aa8"/></svg><div class="t" style="left:612px;top:375px">bin (PC)</div><svg style="left:662px;top:376px;" width="10" height="10" viewBox="0 0 10 10"><path d="M0.5 0.5H2.5L5 3L7.5 0.5H9.5V2.5L7 5L9.5 7.5V9.5H7.5L5 7L2.5 9.5H0.5V7.5L3 5L0.5 2.5Z" fill="#fff" stroke="#5a5a5a" stroke-linejoin="round"/></svg><div class="m" style="left:588px;top:394px;line-height:16px;color:#2a2a2a">Microsoft Windows [Version 10.0.10586]
(c) 2015 Microsoft Corporation. Všechna práva vyhrazena.

E:\Dokumenty\Java\ProjektJNIEclipse\bin&gt;javah -jni ProgramString

E:\Dokumenty\Java\ProjektJNIEclipse\bin&gt;dir
 Volume in drive E is Data
 Volume Serial Number is 70CA-BBBD

 Directory of E:\Dokumenty\Java\ProjektJNIEclipse\bin

21.12.2015  09:27    &lt;DIR&gt;          .
21.12.2015  09:27    &lt;DIR&gt;          ..
21.12.2015  08:48               637 ProgramString.class
21.12.2015  09:27               635 ProgramString.h
               2 File(s)          1 272 bytes
               2 Dir(s)  679 872 196 608 bytes free

E:\Dokumenty\Java\ProjektJNIEclipse\bin&gt;</div><div class="a" style="left:1420px;top:391px;width:16px;height:479px;background:#f0f0f0"></div><svg style="left:1423px;top:398px;" width="8" height="5" viewBox="0 0 8 5"><path d="M0.7 4.3L4 1L7.3 4.3" fill="none" stroke="#b8b8b8" stroke-width="2"/></svg><svg style="left:1423px;top:859px;" width="8" height="5" viewBox="0 0 8 5"><path d="M0.7 0.7L4 4L7.3 0.7" fill="none" stroke="#b8b8b8" stroke-width="2"/></svg><svg style="left:5px;top:51px;" width="16" height="15" viewBox="0 0 16 15"><rect x="0.5" y="2.5" width="13" height="12" fill="#f0f6fc" stroke="#a08a50"/><rect x="1" y="3" width="12" height="2" fill="#4a90d8"/><path d="M2 14Q9 12 12 6" fill="none" stroke="#f4d890" stroke-width="1.5"/><path d="M11.5 0.5L13 3L15.5 3.5L13 4.5L12 7L11 4.5L8.5 3.5L11 3Z" fill="#fff8d0" stroke="#c8a030" stroke-width="0.9"/></svg><svg style="left:27px;top:57px;" width="8" height="5" viewBox="0 0 8 5"><path d="M0 0H7.5L3.75 4.5Z" fill="#202020"/></svg><svg style="left:42px;top:52px;" width="15" height="15" viewBox="0 0 15 15"><path d="M0.5 2Q0.5 0.5 2 0.5H13Q14.5 0.5 14.5 2V14.5H0.5Z" fill="#eaeaea" stroke="#c0c0c0"/><path d="M3.5 0.5V5.5H11.5V0.5M3 14.5V9.5H12V14.5" fill="#f4f4f4" stroke="#c0c0c0"/><path d="M5 2.5H10M5 4.5H10" stroke="#c8c8c8"/></svg><svg style="left:65px;top:52px;" width="16" height="15" viewBox="0 0 16 15"><path d="M0.5 4V1.5Q0.5 0.5 1.5 0.5H10Q11 0.5 11 1.5" fill="none" stroke="#c8c8c8"/><path d="M2.5 6V3.5Q2.5 2.5 3.5 2.5H12Q13 2.5 13 3.5" fill="none" stroke="#c8c8c8"/><path d="M4.5 6Q4.5 4.5 6 4.5H14Q15.5 4.5 15.5 6V14.5H4.5Z" fill="#eaeaea" stroke="#c0c0c0"/><path d="M7 14.5V10.5H13V14.5" fill="#f4f4f4" stroke="#c0c0c0"/></svg><div class="a" style="left:86px;top:50px;width:1px;height:18px;background:#909090"></div><svg style="left:97px;top:52px;" width="14" height="15" viewBox="0 0 14 15"><path d="M0.5 0.5H9L12.5 4V14.5H0.5Z" fill="#f0f4fa" stroke="#a0a8b8"/><path d="M9 0.5V4H12.5" fill="#e8d8a0" stroke="#a08a50"/><path d="M2 3.5H7M2 5.5H8" stroke="#90a8d0"/><text x="0.5" y="13.5" font-family="Liberation Sans" font-size="7.5" font-weight="bold" fill="#1a3a6a">010</text></svg><svg style="left:168px;top:52px;" width="14" height="14" viewBox="0 0 14 14"><rect x="0.5" y="0.5" width="13" height="10" fill="#3a6ab8"/><rect x="2" y="2" width="10" height="7" fill="#e8f0fa"/><path d="M3.5 4.5H9M3.5 6.5H7" stroke="#3a6ab8"/><rect x="5.5" y="10.5" width="3" height="1.5" fill="#2a5aa8"/><rect x="2.5" y="12" width="9" height="1.6" fill="#2a5aa8"/></svg><svg style="left:287px;top:52px;" width="13" height="13" viewBox="0 0 13 13"><circle cx="6.5" cy="6.5" r="4" fill="#5a9ad8" stroke="#2a5a98"/><circle cx="6.5" cy="6.5" r="2" fill="#a0c8f0"/><path d="M0.5 0.5L12.5 12.5" stroke="#1a3a7a" stroke-width="1.2"/></svg><svg style="left:333px;top:51px;" width="16" height="16" viewBox="0 0 16 16"><rect x="0.5" y="2.5" width="11" height="12" fill="#f4d8a8" stroke="#b06a3a"/><path d="M6.5 2.5V14.5M0.5 8.5H11.5" stroke="#8a4a2a" stroke-width="1.2"/><path d="M12 0.5L13.5 3L15.8 3.5L13.5 4.5L12.5 7L11.5 4.5L9 3.5L11.5 3Z" fill="#fff8d0" stroke="#c8a030" stroke-width="0.9"/></svg><svg style="left:357px;top:51px;" width="16" height="16" viewBox="0 0 16 16"><circle cx="7" cy="8.5" r="6.5" fill="#2a9a3a"/><path d="M10 6Q9 4.5 7.2 4.5Q3.8 4.5 3.8 8.5Q3.8 12.5 7.2 12.5Q9 12.5 10 11" fill="none" stroke="#fff" stroke-width="2.2"/><path d="M12 0.5L13.5 3L15.8 3.5L13.5 4.5L12.5 7L11.5 4.5L9 3.5L11.5 3Z" fill="#fff8d0" stroke="#c8a030" stroke-width="0.9"/></svg><svg style="left:379px;top:57px;" width="8" height="5" viewBox="0 0 8 5"><path d="M0 0H7.5L3.75 4.5Z" fill="#202020"/></svg><svg style="left:394px;top:52px;" width="15" height="15" viewBox="0 0 15 15"><path d="M1 2H8V6H5L4 14L2 10H1Z" fill="#a0a0a0"/><circle cx="10" cy="5" r="4" fill="#e4e4e4" stroke="#a8a8a8" stroke-width="1.4"/><path d="M9 3.5Q8 5 10 6.5" fill="none" stroke="#a8a8a8"/></svg><svg style="left:416px;top:51px;" width="17" height="16" viewBox="0 0 17 16"><path d="M16 0.5L14.5 9L8 15H1.5Q4 12 6 10L13 2Z" fill="#dcdcdc" stroke="#c8c8c8"/></svg><svg style="left:442px;top:54px;" width="13" height="13" viewBox="0 0 13 13"><circle cx="4.5" cy="8.5" r="3.8" fill="#9a9a9a"/><circle cx="10" cy="5" r="2.6" fill="#a8a8a8"/><path d="M2 3.5H7M9 0.5H12" stroke="#b0b0b0" stroke-dasharray="1 1"/></svg><svg style="left:463px;top:52px;" width="14" height="15" viewBox="0 0 14 15"><rect x="0.5" y="0.5" width="13" height="14" fill="#f0f0f0" stroke="#c0c0c0"/><rect x="4" y="3.5" width="6" height="8" fill="#e0e0e0" stroke="#a8a8a8"/><path d="M2.5 2.5V12.5M12.5 2.5V12.5" stroke="#c8c8c8" stroke-dasharray="1 1"/></svg><svg style="left:486px;top:52px;" width="14" height="15" viewBox="0 0 14 15"><rect x="0.5" y="0.5" width="13" height="14" fill="#f0f0f0" stroke="#c0c0c0"/><path d="M5 3.5H11M6.5 3V12M9.5 3V12" stroke="#a8a8a8" stroke-width="1.4"/><circle cx="5.5" cy="5.5" r="2.2" fill="#a8a8a8"/></svg><svg style="left:509px;top:51px;" width="16" height="16" viewBox="0 0 16 16"><ellipse cx="8.5" cy="9" rx="4" ry="5" fill="#90c890" stroke="#2a5a4a" stroke-width="0.9" transform="rotate(-35 8.5 9)"/><path d="M1 5L5 7M0.5 10H4.5M2 15L5.5 12M8 0.5L7.5 4M13 3L11 5.5M15.5 8L12.5 8.5M14 14L11 11.5" stroke="#1a4a4a" stroke-width="1.1"/></svg><svg style="left:532px;top:57px;" width="8" height="5" viewBox="0 0 8 5"><path d="M0 0H7.5L3.75 4.5Z" fill="#202020"/></svg><svg style="left:548px;top:51px;" width="15" height="16" viewBox="0 0 15 16"><circle cx="7.5" cy="8" r="7" fill="#1a8a2a"/><circle cx="7.5" cy="8" r="5.8" fill="#3aaa48"/><path d="M5.5 4.5L11 8L5.5 11.5Z" fill="#fff"/></svg><svg style="left:570px;top:57px;" width="8" height="5" viewBox="0 0 8 5"><path d="M0 0H7.5L3.75 4.5Z" fill="#202020"/></svg><svg style="left:585px;top:51px;" width="16" height="16" viewBox="0 0 16 16"><circle cx="6" cy="6" r="5.7" fill="#2a9a38"/><path d="M4.5 3.2L8.5 6L4.5 8.8Z" fill="#fff"/><rect x="7.5" y="9.5" width="8" height="6" fill="#e02020"/><path d="M10 9.5V8H13V9.5M7.5 12H15.5" stroke="#a01010" stroke-width="0.9" fill="none"/></svg><svg style="left:608px;top:57px;" width="8" height="5" viewBox="0 0 8 5"><path d="M0 0H7.5L3.75 4.5Z" fill="#202020"/></svg><svg style="left:646px;top:51px;" width="17" height="16" viewBox="0 0 17 16"><path d="M0.5 14.5V6Q0.5 5 1.5 5H5L6 6H10V9" fill="#fdf0c0" stroke="#b88a3a"/><path d="M0.5 14.5L3 9H14L11.5 14.5Z" fill="#f8d890" stroke="#b88a3a" stroke-linejoin="round"/><circle cx="7" cy="4" r="3.6" fill="#6a5aa8"/><circle cx="11.8" cy="6.5" r="3.6" fill="#3a9a48"/></svg><svg style="left:669px;top:52px;" width="16" height="15" viewBox="0 0 16 15"><path d="M0.5 13.5V5Q0.5 4 1.5 4H5L6 5H10V8" fill="#fdf0c0" stroke="#b88a3a"/><path d="M0.5 13.5L3 8H15L12.5 13.5Z" fill="#f8d890" stroke="#b88a3a" stroke-linejoin="round"/><rect x="5.5" y="2.5" width="8" height="6" fill="#e8eef8" stroke="#8a9ab8"/><rect x="8" y="0.5" width="3" height="2" fill="#8a9ab8"/></svg><svg style="left:693px;top:51px;" width="17" height="16" viewBox="0 0 17 16"><path d="M9 4L13.5 0.5L16 3L12.5 7.5Z" fill="#f4c860" stroke="#b8863a"/><path d="M1 14L9 4L12.5 7.5L3.5 15.5Z" fill="#a0a0a0"/><path d="M1 14L5 9L8 12L3.5 15.5Z" fill="#fff8a0"/><circle cx="13.5" cy="3" r="0.8" fill="#3a5aa8"/></svg><svg style="left:716px;top:57px;" width="8" height="5" viewBox="0 0 8 5"><path d="M0 0H7.5L3.75 4.5Z" fill="#202020"/></svg><svg style="left:779px;top:51px;" width="15" height="16" viewBox="0 0 15 16"><rect x="4.5" y="1.5" width="10" height="13" fill="#f4f4f4" stroke="#c8c8c8"/><path d="M7 4.5H12M7 6.5H12M8 8.5H12M8 10.5H12" stroke="#d0d0d0"/><path d="M3 0.5V7H0.5L4 11L7.5 7H5V0.5Z" fill="#e8e4d8" stroke="#b0ad9c" stroke-width="0.9"/><rect x="5.5" y="12" width="3" height="1.5" fill="#a0a0a0"/></svg><svg style="left:802px;top:57px;" width="8" height="5" viewBox="0 0 8 5"><path d="M0 0H7.5L3.75 4.5Z" fill="#707070"/></svg><svg style="left:816px;top:51px;" width="15" height="16" viewBox="0 0 15 16"><rect x="1.5" y="0.5" width="12" height="13" fill="#f4f4f4" stroke="#c8c8c8"/><path d="M7 4.5H12M7 6.5H12M8 8.5H12M8 10.5H12" stroke="#d0d0d0"/><rect x="2.5" y="1.5" width="3" height="1.5" fill="#a0a0a0"/><path d="M3 15.5V9.5H0.5L4.5 5L8.5 9.5H6V15.5Z" fill="#e8e4d8" stroke="#b0ad9c" stroke-width="0.9"/></svg><svg style="left:840px;top:57px;" width="8" height="5" viewBox="0 0 8 5"><path d="M0 0H7.5L3.75 4.5Z" fill="#707070"/></svg><svg style="left:853px;top:52px;" width="17" height="14" viewBox="0 0 17 14"><path d="M2.5 7L8 1.5V4.5H15Q16.5 4.5 16.5 6V8Q16.5 9.5 15 9.5H8V12.5Z" fill="#fde890" stroke="#c8872a" stroke-linejoin="round"/><text x="-0.5" y="8" font-family="Liberation Sans" font-size="9" font-weight="bold" fill="#2a4aa0">*</text></svg><svg style="left:879px;top:53px;" width="15" height="13" viewBox="0 0 15 13"><path d="M0.5 6L6.5 0.5V3.5H13Q14.5 3.5 14.5 5V7Q14.5 8.5 13 8.5H6.5V11.5Z" fill="#fde8a0" stroke="#c8872a" stroke-linejoin="round"/></svg><svg style="left:901px;top:57px;" width="8" height="5" viewBox="0 0 8 5"><path d="M0 0H7.5L3.75 4.5Z" fill="#202020"/></svg><svg style="left:917px;top:53px;" width="15" height="13" viewBox="0 0 15 13"><path d="M14.5 6L8.5 0.5V3.5H2Q0.5 3.5 0.5 5V7Q0.5 8.5 2 8.5H8.5V11.5Z" fill="#fafafa" stroke="#b8b8b8" stroke-linejoin="round"/></svg><svg style="left:939px;top:57px;" width="8" height="5" viewBox="0 0 8 5"><path d="M0 0H7.5L3.75 4.5Z" fill="#707070"/></svg><div class="a" style="left:1089px;top:48px;width:85px;height:21px;background:#fff;border:1px solid #6a6a6a"></div><div class="t" style="left:1092px;top:52px;color:#505050">Quick Access</div><svg style="left:1192px;top:52px;" width="15" height="15" viewBox="0 0 15 15"><rect x="0.5" y="2.5" width="12" height="12" fill="#f0f4f8" stroke="#a08a50"/><rect x="1" y="3" width="11" height="2" fill="#4a90d8"/><path d="M5.5 5V14.5M0.5 9.5H12.5" stroke="#a08a50"/><path d="M11.5 0.5L13 3L15 3.5L13 4.5L12 7L11 4.5L8.5 3.5L11 3Z" fill="#fff8d0" stroke="#c8a030" stroke-width="0.9"/></svg><div class="a" style="left:1213px;top:51px;width:1px;height:17px;background:#909090"></div><svg style="left:1223px;top:51px;" width="16" height="16" viewBox="0 0 16 16"><rect x="0.5" y="6.5" width="4" height="4" fill="#fde890" stroke="#b8863a"/><rect x="8.5" y="11.5" width="4" height="4" fill="#fde890" stroke="#b8863a"/><path d="M2.5 10.5V13.5H8.5M4.5 8.5H7" stroke="#6a6a6a"/><ellipse cx="11" cy="4.5" rx="4.2" ry="4" fill="#b86a3a" stroke="#7a3a1a" stroke-width="0.8"/><path d="M9 2Q12 4 12 7.5" stroke="#e8b888" fill="none"/></svg><div class="t" style="left:1242px;top:53px;letter-spacing:-0.7px">Java EE</div><div class="a" style="left:1287px;top:49px;width:53px;height:21px;background:#cce8ff;border:1px solid #99d1ff"></div><svg style="left:1291px;top:51px;" width="17" height="17" viewBox="0 0 17 17"><path d="M2.5 1V9M6.5 1V9M0.5 3.5H9M0.5 7.5H9" stroke="#8a5a3a" stroke-width="1.1"/><path d="M13 0.5V7Q13 9.5 10.5 9.5" fill="none" stroke="#3a6ab8" stroke-width="1.5"/><circle cx="4" cy="11.5" r="3.8" fill="#3a9a48"/><circle cx="9" cy="13" r="3.8" fill="#6a5aa8"/></svg><div class="t" style="left:1311px;top:53px;letter-spacing:-0.9px">Java</div><svg style="left:1344px;top:52px;" width="16" height="16" viewBox="0 0 16 16"><rect x="0.5" y="0.5" width="11" height="11" fill="#f0f4f8" stroke="#a08a50"/><rect x="1" y="1" width="10" height="2" fill="#4a90d8"/><path d="M4.5 3V11.5M0.5 7.5H11.5" stroke="#a08a50"/><rect x="5.5" y="6.5" width="10" height="9" fill="#e8f0fa" stroke="#a08a50"/><text x="7.5" y="14.5" font-family="Liberation Sans" font-size="8" font-weight="bold" fill="#2a5aa8">c</text></svg><div class="t" style="left:1363px;top:53px">C/C++</div><div class="a" style="left:501px;top:373px;width:4px;height:527px;background:linear-gradient(to right,rgba(0,0,0,0.5),rgba(0,0,0,0.15) 60%,rgba(0,0,0,0));-webkit-mask-image:linear-gradient(to bottom,transparent,#000 4px)"></div><div class="a" style="left:139px;top:368px;width:362px;height:532px;background:#f2f2f2;border:1px solid #c4c4c4;border-bottom:none"></div><div class="a" style="left:140px;top:369px;width:30px;height:531px;background:#f0f0f0"></div><div class="t" style="left:174px;top:375px">New</div><svg style="left:485px;top:378px;" width="5" height="8" viewBox="0 0 5 8"><path d="M0.6 0.6L4 4L0.6 7.4" fill="none" stroke="#404040" stroke-width="1.2"/></svg><div class="t" style="left:174px;top:397px">Go Into</div><div class="t" style="left:174px;top:419px">Open in New Window</div><div class="t" style="left:174px;top:448px">Copy</div><div class="t" style="left:174px;top:470px;color:#6d6d6d">Paste</div><div class="t" style="left:174px;top:492px">Delete</div><div class="t" style="left:174px;top:514px">Move...</div><div class="t" style="left:174px;top:536px">Rename...</div><div class="t" style="left:174px;top:565px">Import...</div><div class="t" style="left:174px;top:587px">Export...</div><div class="t" style="left:174px;top:616px">Refresh</div><div class="t" style="left:174px;top:645px">Validate</div><div class="t" style="left:174px;top:667px;letter-spacing:-0.2px">Show in Remote Systems view</div><div class="t" style="left:174px;top:689px">Run As</div><svg style="left:485px;top:692px;" width="5" height="8" viewBox="0 0 5 8"><path d="M0.6 0.6L4 4L0.6 7.4" fill="none" stroke="#404040" stroke-width="1.2"/></svg><div class="t" style="left:174px;top:711px">Debug As</div><svg style="left:485px;top:714px;" width="5" height="8" viewBox="0 0 5 8"><path d="M0.6 0.6L4 4L0.6 7.4" fill="none" stroke="#404040" stroke-width="1.2"/></svg><div class="t" style="left:174px;top:733px">Profile As</div><svg style="left:485px;top:736px;" width="5" height="8" viewBox="0 0 5 8"><path d="M0.6 0.6L4 4L0.6 7.4" fill="none" stroke="#404040" stroke-width="1.2"/></svg><div class="t" style="left:174px;top:755px">Restore from Local History...</div><div class="t" style="left:174px;top:777px">Team</div><svg style="left:485px;top:780px;" width="5" height="8" viewBox="0 0 5 8"><path d="M0.6 0.6L4 4L0.6 7.4" fill="none" stroke="#404040" stroke-width="1.2"/></svg><div class="t" style="left:174px;top:799px">Compare With</div><svg style="left:485px;top:802px;" width="5" height="8" viewBox="0 0 5 8"><path d="M0.6 0.6L4 4L0.6 7.4" fill="none" stroke="#404040" stroke-width="1.2"/></svg><div class="t" style="left:174px;top:821px">Source</div><svg style="left:485px;top:824px;" width="5" height="8" viewBox="0 0 5 8"><path d="M0.6 0.6L4 4L0.6 7.4" fill="none" stroke="#404040" stroke-width="1.2"/></svg><div class="t" style="left:174px;top:850px">Properties</div><div class="t" style="left:174px;top:879px;color:#6d6d6d">Remove from Context</div><div class="a" style="left:170px;top:440px;width:328px;height:1px;background:#d7d7d7"></div><div class="a" style="left:170px;top:557px;width:328px;height:1px;background:#d7d7d7"></div><div class="a" style="left:170px;top:608px;width:328px;height:1px;background:#d7d7d7"></div><div class="a" style="left:170px;top:637px;width:328px;height:1px;background:#d7d7d7"></div><div class="a" style="left:170px;top:842px;width:328px;height:1px;background:#d7d7d7"></div><div class="a" style="left:170px;top:871px;width:328px;height:1px;background:#d7d7d7"></div><div class="t" style="left:367px;top:879px;color:#6d6d6d;letter-spacing:0.3px">Ctrl+Alt+Shift+Down</div><svg style="left:145px;top:447px;" width="16" height="17" viewBox="0 0 16 17"><path d="M0.5 0.5H8L10.5 3V13.5H0.5Z" fill="#eef2fa" stroke="#8a9ab8"/><path d="M2.5 3V12" stroke="#6a8ac8" stroke-dasharray="1 1"/><path d="M4.5 3.5H12L15 6.5V15.5H4.5Z" fill="#f0f4fc" stroke="#8a8a70"/><path d="M12 3.5V6.5H15" fill="#e8d8a0" stroke="#a08a50"/><path d="M6.5 7.5H12M6.5 9.5H13M6.5 11.5H13M6.5 13.5H11" stroke="#5a7ab8"/></svg><svg style="left:147px;top:470px;" width="14" height="16" viewBox="0 0 14 16"><path d="M0.5 2.5H3.5V1.5Q5 0 7 1.5V2.5H10.5V14.5Q10.5 15.5 9.5 15.5H1.5Q0.5 15.5 0.5 14.5Z" fill="#e4e4e4" stroke="#c8c8c8"/><rect x="6.5" y="7.5" width="7" height="8" fill="#f4f4f4" stroke="#c8c8c8"/><path d="M8 10.5H12M8 12.5H12" stroke="#c8c8c8"/></svg><svg style="left:147px;top:492px;" width="14" height="14" viewBox="0 0 14 14"><path d="M3 1L7 5L11 1L13 3L9 7L13 11L11 13L7 9L3 13L1 11L5 7L1 3Z" fill="#e84848" stroke="#c82828" stroke-width="0.8" stroke-linejoin="round"/><path d="M3 2L7 6L11 2" stroke="#f89090" fill="none" stroke-width="0.8"/></svg><svg style="left:145px;top:566px;" width="16" height="15" viewBox="0 0 16 15"><path d="M0.5 6.5V14.5H15.5V6.5H13.5V12.5H2.5V6.5Z" fill="#c8d8ee" stroke="#7a9ac8"/><path d="M3 1L9.5 7.5" stroke="#5a7aa8" stroke-width="1"/><path d="M10.5 8.5L10 4.5L6.5 8Z" fill="#2a4a7a"/></svg><svg style="left:145px;top:586px;" width="16" height="15" viewBox="0 0 16 15"><path d="M0.5 6.5V14.5H15.5V6.5H13.5V12.5H2.5V6.5Z" fill="#c8d8ee" stroke="#7a9ac8"/><path d="M3 1.5L9.5 8" stroke="#5a7aa8" stroke-width="1"/><path d="M2 0.5L6 1L2.5 4.5Z" fill="#2a4a7a"/></svg><svg style="left:145px;top:615px;" width="16" height="18" viewBox="0 0 16 18"><path d="M4.5 1.5H11L14.5 5V16.5H4.5Z" fill="#eef2fa" stroke="#a8a080"/><path d="M11 1.5V5H14.5" fill="#e8d8a0" stroke="#a8a080"/><path d="M7 4Q2 4 2.5 8L1 7.5L3 10.5L5 7.5L3.8 8Q4 6 7 6Z" fill="#f8d860" stroke="#c89a30" stroke-width="0.7"/><path d="M3.5 14Q8.5 14 8 10L9.5 10.5L7.5 7.5L5.5 10.5L6.7 10Q6.5 12 3.5 12Z" fill="#f8d860" stroke="#c89a30" stroke-width="0.7"/></svg><svg style="left:147px;top:880px;" width="17" height="14" viewBox="0 0 17 14"><path d="M4 10L6 2Q7 0.5 8 2L9 6L12 7Q13 8 12 9L8 11Z" fill="#e0e0e0" stroke="#b8b8b8" stroke-width="0.9"/><path d="M0.5 12.5H16.5" stroke="#b8b8b8" stroke-dasharray="2 1"/></svg><div class="a" style="left:-1px;top:68px;width:125px;height:40px;border:5px solid #ed1c24"></div><div class="a" style="left:3px;top:204px;width:254px;height:99px;border:5px solid #ed1c24"></div><div class="a" style="left:122px;top:601px;width:397px;height:39px;border:5px solid #ed1c24"></div><div class="a" style="left:950px;top:332px;width:123px;height:44px;border:5px solid #ed1c24"></div></body></html>
